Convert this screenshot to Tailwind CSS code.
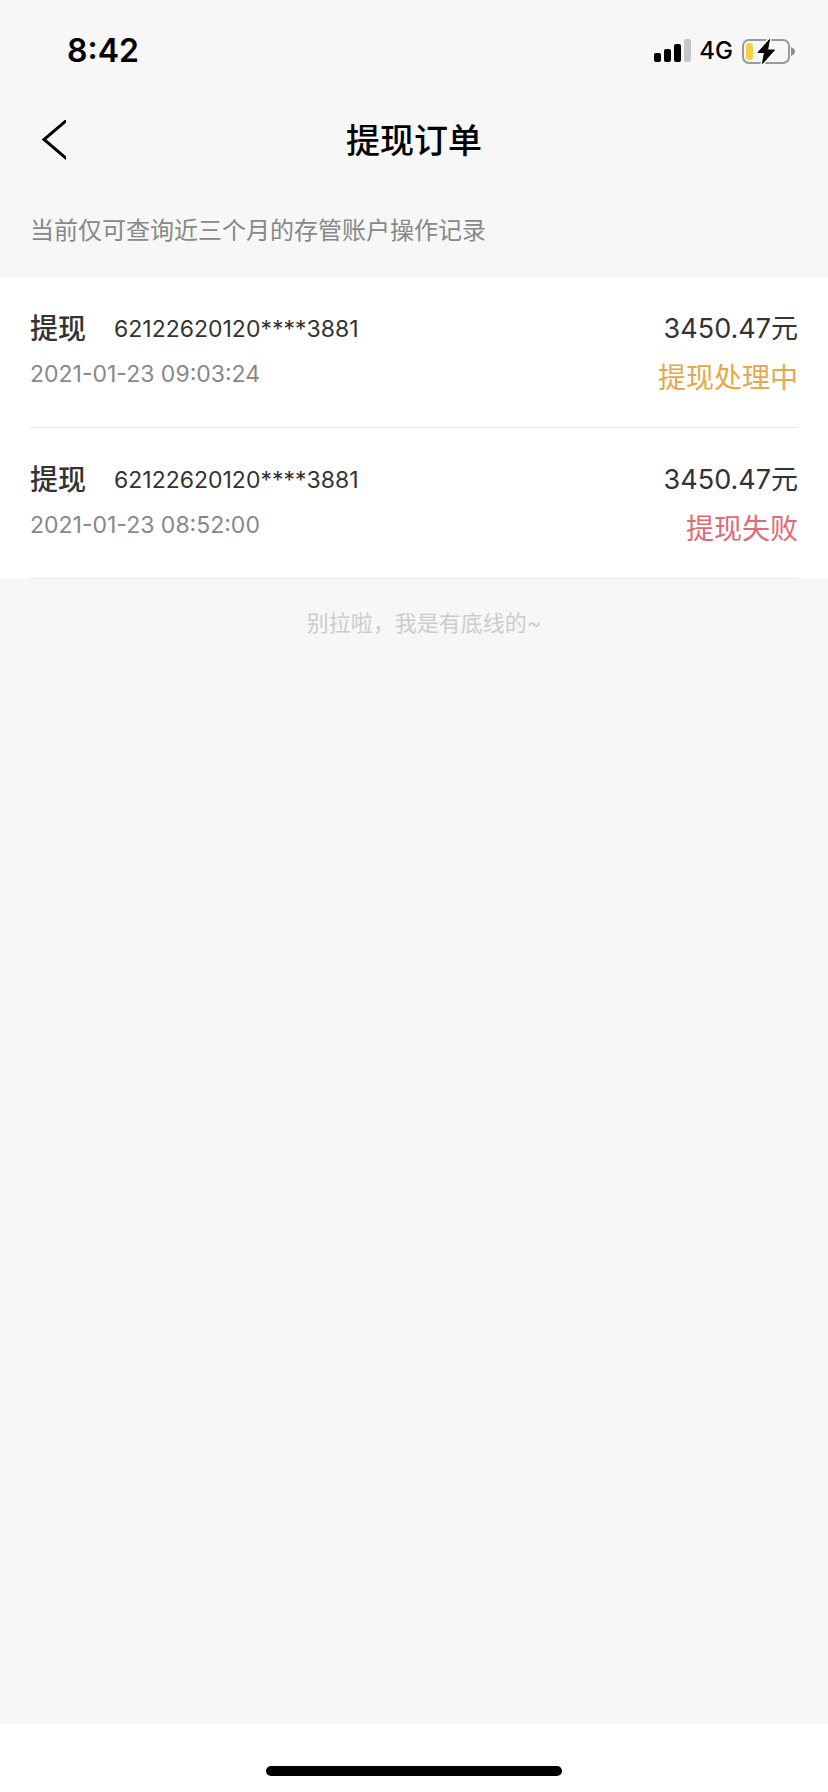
<!DOCTYPE html>
<html lang="zh-CN">
<head>
    <meta charset="UTF-8">
    <meta name="viewport" content="width=device-width, initial-scale=1.0">
    <title>提现订单</title>
    <script src="https://cdn.jsdelivr.net/npm/@tailwindcss/browser@4"></script>
    <style>
        body {
            font-family: Inter, 'Noto Sans CJK SC', sans-serif;
        }
    </style>
</head>
<body class="bg-[#f7f7f7] min-h-screen flex flex-col text-[#333333]">
    <!-- Status bar -->
    <div class="h-[100px] pt-px pl-[67px] pr-[33px] flex items-center justify-between text-black">
        <span class="text-[32px] leading-10 font-semibold">8:42</span>
        <div class="flex items-center gap-2">
            <svg class="w-[37px] h-[23px]" viewBox="0 0 37 23" aria-hidden="true">
                <rect x="0" y="14" width="7" height="9" rx="2"/>
                <rect x="10" y="10" width="7" height="13" rx="2"/>
                <rect x="20" y="5" width="7" height="18" rx="2"/>
                <rect x="30" y="0" width="7" height="23" rx="2" fill="#c6c6c6"/>
            </svg>
            <span class="text-[24px] leading-10 font-medium">4G</span>
            <svg class="w-[54px] h-[28px]" viewBox="0 0 54 28" aria-hidden="true">
                <rect x="2" y="3" width="46" height="23" rx="6" fill="none" stroke="#999999" stroke-width="2"/>
                <rect x="5" y="6" width="7" height="17" rx="3" fill="#f7ce46"/>
                <path d="M50 10c3 1 4 3 4 4.500s-1 3.500-4 4.500z" fill="#8e8e8e"/>
                <path d="M28.500 2.500 17 15.500h6.500L21.500 26.500 33.500 13h-7z" fill="#000" stroke="#f7f7f7" stroke-width="4" stroke-linejoin="round"/>
                <path d="M28.500 2.500 17 15.500h6.500L21.500 26.500 33.500 13h-7z" fill="#000" stroke="#000" stroke-width="1" stroke-linejoin="round"/>
            </svg>
        </div>
    </div>

    <!-- Title bar -->
    <header class="h-20 px-[30px] grid grid-cols-[48px_1fr_48px] items-center text-black">
        <button type="button" aria-label="返回" class="h-12 flex items-center pl-3">
            <svg class="w-6 h-10" viewBox="0 0 24 40" fill="none" stroke="#000" stroke-width="3" aria-hidden="true">
                <path d="M25 0 2 19.500 25 39"/>
            </svg>
        </button>
        <h1 class="pt-0.5 text-[34px] leading-10 font-medium text-center">提现订单</h1>
    </header>

    <p class="h-[97px] px-[30px] pt-1 flex items-center text-[24px] leading-8 text-[#888888]">当前仅可查询近三个月的存管账户操作记录</p>

    <!-- Orders -->
    <ul class="bg-white px-[30px]">
        <li class="h-[151px] pt-8 border-b border-[#ebebeb] flex justify-between">
            <div>
                <div class="flex items-center gap-7 leading-10">
                    <span class="text-[28px] font-medium">提现</span>
                    <span class="text-[23px]">62122620120****3881</span>
                </div>
                <time class="block mt-[9px] text-[23px] leading-8 text-[#888888]">2021-01-23 09:03:24</time>
            </div>
            <div class="text-right leading-10">
                <div class="text-[27px]">3450.47元</div>
                <div class="mt-[9px] text-[28px] text-[#e5a84b]">提现处理中</div>
            </div>
        </li>
        <li class="h-[151px] pt-8 border-b border-[#ebebeb] flex justify-between">
            <div>
                <div class="flex items-center gap-7 leading-10">
                    <span class="text-[28px] font-medium">提现</span>
                    <span class="text-[23px]">62122620120****3881</span>
                </div>
                <time class="block mt-[9px] text-[23px] leading-8 text-[#888888]">2021-01-23 08:52:00</time>
            </div>
            <div class="text-right leading-10">
                <div class="text-[27px]">3450.47元</div>
                <div class="mt-[9px] text-[28px] text-[#e06a75]">提现失败</div>
            </div>
        </li>
    </ul>

    <p class="pt-7 pl-5 text-center text-[22px] leading-8 text-[#cccccc]">别拉啦，我是有底线的~</p>

    <!-- Home indicator -->
    <footer class="mt-auto h-[68px] pb-4 bg-white flex items-end justify-center">
        <div class="w-[296px] max-w-full h-[10px] rounded-full bg-black"></div>
    </footer>
</body>
</html>
